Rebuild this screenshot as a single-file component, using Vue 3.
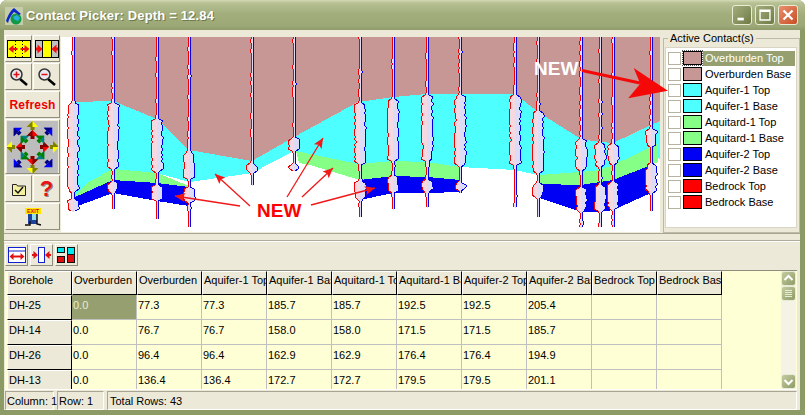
<template>
  <div class="window">
    <div class="title">
      <svg class="app-icon" width="18" height="18" viewBox="0 0 18 18">
        <rect width="18" height="18" fill="#c4ccaa"/>
        <circle cx="11" cy="12" r="5.500" fill="#109a48"/>
        <path d="M8 10l4-2 3 3-2 3-3-1z" fill="#28b0e0"/>
        <path d="M1 14C3 8 6 3 9 1l7 6-2 1-5-3C6 8 4 12 3 16z" fill="#0c28c8"/>
      </svg>
      <span class="title-text">Contact Picker: Depth = 12.84</span>
      <div class="win-btns">
        <button class="wb"><svg width="20" height="20" viewBox="0 0 20 20"><rect x="5" y="13" width="7" height="3" fill="#fff"/></svg></button>
        <button class="wb"><svg width="20" height="20" viewBox="0 0 20 20"><path d="M4.500 4.500h11v11h-11z M4 6h12" fill="none" stroke="#fff" stroke-width="1.500"/></svg></button>
        <button class="wb close"><svg width="20" height="20" viewBox="0 0 20 20"><path d="M5 5l10 10M15 5L5 15" stroke="#fff" stroke-width="2.500"/></svg></button>
      </div>
    </div>

    <div class="body">
      <div class="main">
        <div class="toolbar">
          <button class="tb">
            <svg width="24" height="18" viewBox="0 0 24 18"><rect x=".5" y=".5" width="23" height="17" fill="#ffff00" stroke="#000"/><path d="M8.500 1v16M15.500 1v16" stroke="#000" stroke-dasharray="1 2"/><path d="M1.500 9l5-4v3h4v2h-4v3zM22.500 9l-5-4v3h-4v2h4v3z" fill="#f01010"/></svg>
          </button>
          <button class="tb">
            <svg width="24" height="18" viewBox="0 0 24 18"><rect x=".5" y=".5" width="23" height="17" fill="#c0c0c0" stroke="#000"/><rect x="7.500" y=".5" width="9" height="17" fill="#ffff00" stroke="#000"/><path d="M7.500 9l-5-4.500v3h-1.500v3h1.500v3zM16.500 9l5-4.500v3h1.500v3h-1.500v3z" fill="#f01010"/></svg>
          </button>
          <button class="tb">
            <svg width="20" height="20" viewBox="0 0 20 20"><path d="M11 12l7 6" stroke="#000" stroke-width="2.500"/><circle cx="7.500" cy="7.500" r="5.500" fill="#e8e8f0" stroke="#333" stroke-width="1.500"/><path d="M4.500 7.500h6M7.500 4.500v6" stroke="#e01010" stroke-width="1.500"/></svg>
          </button>
          <button class="tb">
            <svg width="20" height="20" viewBox="0 0 20 20"><path d="M11 12l7 6" stroke="#000" stroke-width="2.500"/><circle cx="7.500" cy="7.500" r="5.500" fill="#e8e8f0" stroke="#333" stroke-width="1.500"/><path d="M4.500 7.500h6" stroke="#e01010" stroke-width="1.500"/></svg>
          </button>
          <button class="tb wide refresh">Refresh</button>
          <button class="tb wide nav">
            <svg width="51" height="52" viewBox="0 0 51 52">
              <rect width="51" height="52" fill="#bdbdbd"/>
              <g v-for="a in navArrows" :key="a.key" :transform="a.transform">
                <path d="M0 -6L-6 0H6z" :fill="a.light"/>
                <path d="M0 -6L-6 0H0z" :fill="a.dark"/>
                <rect x="-2" y="0" width="4" height="3" :fill="a.dark"/>
              </g>
            </svg>
          </button>
          <button class="tb">
            <svg width="16" height="16" viewBox="0 0 16 16"><path d="M1.500 3.500h4l1 1.500h8v9.500h-13z" fill="#f5f0a0" stroke="#222"/><path d="M4 9l3 3 5-6" fill="none" stroke="#111" stroke-width="1.500"/></svg>
          </button>
          <button class="tb help">?</button>
          <button class="tb wide">
            <svg width="18" height="18" viewBox="0 0 18 18"><rect x="1" y="0" width="16" height="6" fill="#ffe800"/><text x="9" y="5" text-anchor="middle" class="exit-text">EXIT</text><rect x="4" y="6" width="9" height="10" fill="#2040a0"/><rect x="8" y="6" width="5" height="6" fill="#90e0f0"/><path d="M1 17h5v-4M13 6v10l4 1" fill="none" stroke="#111" stroke-width="1.500"/></svg>
          </button>
        </div>

        <svg class="canvas" viewBox="61 37 599 195" width="599" height="195" shape-rendering="crispEdges">
          <polygon fill="#c79795" :points="brown"/>
          <polygon fill="#4dffff" :points="cyan"/>
          <polygon fill="#85ff85" :points="greenA"/>
          <polygon fill="#85ff85" :points="greenB"/>
          <polygon fill="#85ff85" :points="greenC"/>
          <polygon fill="#0000f5" :points="blueA"/>
          <polygon fill="#0000f5" :points="blueB"/>
          <polygon fill="#0000f5" :points="blueC"/>
          <g v-for="h in holes" :key="h.x">
            <path :d="h.leftFill" fill="#f6d8e0"/>
            <path :d="h.rightFill" fill="#dcdcf6"/>
            <path :d="h.left" fill="none" stroke="#f00000"/>
            <path :d="h.right" fill="none" stroke="#0000f0"/>
          </g>
          <g shape-rendering="auto">
            <g v-for="(a, i) in thinArrows" :key="i">
              <line :x1="a[0]" :y1="a[1]" :x2="a[2]" :y2="a[3]" stroke="#f01818" stroke-width="1.300"/>
              <polygon :points="arrowHead(a)" fill="#f01818"/>
            </g>
            <path d="M582 70.500L640 83M637 72L664 90L632 96L642 84z" fill="#f40808" stroke="#f40808" stroke-width="3"/>
            <text x="257" y="217" class="new red">NEW</text>
            <text x="534" y="75" class="new white">NEW</text>
          </g>
        </svg>

        <fieldset class="contacts">
          <legend>Active Contact(s)</legend>
          <div class="list">
            <div v-for="(c, i) in contacts" :key="c.name" class="row">
              <span class="check"></span>
              <span :class="['swatch', i === 0 ? 'focus' : '']" :style="{ background: c.color }"></span>
              <span :class="['label', i === 0 ? 'sel' : '']">{{ c.name }}</span>
            </div>
          </div>
        </fieldset>
      </div>

      <div class="actions">
        <button class="ab">
          <svg width="18" height="17" viewBox="0 0 18 17"><rect x=".5" y=".5" width="17" height="15" fill="#fff" stroke="#1020d0" stroke-width="1"/><path d="M1 4h16" stroke="#1020d0"/><path d="M3 9.500h12" stroke="#e01010" stroke-width="2"/><path d="M1.500 9.500l4-3.500v7zM16.500 9.500l-4-3.500v7z" fill="#e01010"/></svg>
        </button>
        <button class="ab">
          <svg width="20" height="17" viewBox="0 0 20 17"><rect x="6.500" y=".5" width="6" height="15" fill="#fff" stroke="#1020d0"/><path d="M0 8h5M14 8h5" stroke="#e01010" stroke-width="2"/><path d="M6 8L1.500 4v8zM13 8l4.500-4v8z" fill="#e01010"/></svg>
        </button>
        <button class="ab">
          <svg width="19" height="16" viewBox="0 0 19 16"><rect x=".5" y=".5" width="7" height="5" fill="#00e8f0" stroke="#111"/><rect x="10.500" y=".5" width="7" height="7" fill="#00e8f0" stroke="#111"/><rect x=".5" y="9.500" width="7" height="6" fill="#e01010" stroke="#111"/><rect x="10.500" y="7.500" width="7" height="8" fill="#e01010" stroke="#111"/></svg>
        </button>
      </div>

      <div class="grid-wrap">
        <div class="grid">
          <div class="grow head">
            <div class="cell hd" v-for="h in headers" :key="h">{{ h }}</div>
          </div>
          <div class="grow" v-for="(r, i) in rows" :key="r[0]">
            <div class="cell hd side">{{ r[0] }}</div>
            <div v-for="(v, j) in r.slice(1)" :key="j" :class="['cell', i === 0 && j === 0 ? 'cur' : '']">{{ v }}</div>
          </div>
        </div>
        <div class="scroll">
          <button class="sb"><svg width="13" height="13" viewBox="0 0 13 13"><path d="M2.500 8l4-4 4 4" fill="none" stroke="#fff" stroke-width="2"/></svg></button>
          <button class="sb thumb"><svg width="9" height="9" viewBox="0 0 9 9"><path d="M1 1.500h7M1 3.500h7M1 5.500h7M1 7.500h7" stroke="#e8ecd0"/></svg></button>
          <div class="track"></div>
          <button class="sb"><svg width="13" height="13" viewBox="0 0 13 13"><path d="M2.500 5l4 4 4-4" fill="none" stroke="#fff" stroke-width="2"/></svg></button>
        </div>
      </div>

      <div class="status">
        <span class="pane p1">Column: 1</span>
        <span class="pane p2">Row: 1</span>
        <span class="pane p3">Total Rows: 43</span>
      </div>
    </div>
  </div>
</template>

<script setup>
const pts = a => a.map(p => p.join(',')).join(' ')

const brownLine = [[73,102],[113,101],[157,119],[189,150],[252,161],[294,137],[358,102],[393,97],[427,94],[460,94],[515,94],[538,112],[581,139],[600,142],[613,143],[651,125],[660,121]]
const brown = pts([[73,37],[660,37],...brownLine.slice().reverse()])
const cyan = pts([...brownLine,[660,160],[651,147],[613,165],[600,170],[581,172],[538,175],[515,170],[460,167],[427,162],[393,161],[358,164],[294,151],[252,173],[189,182],[157,173],[113,169],[73,197]])
const greenA = pts([[73,197],[90,181],[113,169],[157,173],[189,186],[189,187],[157,183],[113,180],[78,197]])
const greenB = pts([[296,151],[358,164],[393,161],[427,162],[460,167],[460,180],[427,177],[393,176],[360,180],[310,165],[299,163]])
const greenC = pts([[538,175],[581,172],[600,170],[613,165],[651,147],[658,143],[658,162],[651,165],[613,180],[600,182],[581,185],[540,184]])
const blueA = pts([[75,197],[113,180],[157,183],[189,187],[189,206],[157,201],[113,193],[75,207]])
const blueB = pts([[360,180],[393,176],[427,177],[460,180],[460,192],[427,193],[393,193],[360,200]])
const blueC = pts([[540,184],[581,185],[600,182],[613,180],[651,165],[651,193],[613,210],[600,212],[581,212],[540,198]])

const holeData = [
  [73, 212, [102, 193], [198, 212]],
  [113, 210, [102, 170], [181, 193]],
  [157, 219, [118, 173], [184, 201]],
  [189, 227, [152, 180], [187, 203]],
  [252, 186, [163, 174]],
  [294, 171, [137, 152], [163, 171]],
  [360, 217, [102, 165], [180, 200]],
  [393, 210, [98, 162], [175, 193]],
  [427, 208, [94, 162], [179, 193]],
  [460, 193, [94, 167], [182, 191]],
  [515, 208, [94, 166]],
  [538, 217, [110, 174], [183, 198]],
  [581, 228, [138, 171], [187, 212]],
  [600, 227, [142, 167], [184, 212]],
  [613, 227, [143, 165], [181, 210]],
  [651, 212, [128, 147], [163, 193]]
]

// little stable wobble so the logs look like real curves
function wobble(x, y) {
  const s = Math.sin(x * 12.9898 + y * 78.233) * 43758.5453
  return s - Math.floor(s)
}

function halfWidth(blobs, y) {
  for (const [a, b] of blobs) {
    if (y >= a && y <= b) {
      return 1 + Math.min(y - a, b - y, 3)
    }
  }
  return 1
}

const holes = holeData.map(([x, bottom, ...blobs]) => {
  const l = []
  const r = []
  for (let y = 37; y <= bottom; y += 2) {
    const w = halfWidth(blobs, y)
    const amp = w > 2 ? 2.500 : (wobble(x, y * 2) > 0.75 ? 1 : 0)
    l.push([Math.round(x - w - wobble(x, y) * amp), y])
    r.push([Math.round(x + w + wobble(x + 3, y) * amp), y])
  }
  const line = a => 'M' + a.map(p => p.join(' ')).join('L')
  const back = [[x, bottom], [x, 37]]
  return {
    x,
    left: line(l),
    right: line(r),
    leftFill: line([...l, ...back]) + 'z',
    rightFill: line([...r, ...back]) + 'z'
  }
})

const thinArrows = [
  [250, 206, 215, 174],
  [240, 206, 175, 196],
  [287, 197, 323, 138],
  [302, 197, 333, 168],
  [311, 205, 375, 188]
]

function arrowHead([x1, y1, x2, y2]) {
  const a = Math.atan2(y2 - y1, x2 - x1)
  const p = (d, t) => [x2 - d * Math.cos(a + t), y2 - d * Math.sin(a + t)].join(',')
  return [x2, y2].join(',') + ' ' + p(11, 0.42) + ' ' + p(8, 0) + ' ' + p(11, -0.42)
}

const navArrows = []
const navOuter = [[25.500, 6, 0], [46, 26, 90], [25.500, 47, 180], [5, 26, 270]]
const navOuterDiag = [[11, 11, 315], [41, 11, 45], [11, 42, 225], [41, 42, 135]]
const navInner = [[25.500, 15, 0], [36, 26, 90], [25.500, 38, 180], [15, 26, 270]]
const navInnerDiag = [[18, 19, 315], [33, 19, 45], [18, 34, 225], [33, 34, 135]]
const addNav = (list, light, dark) => list.forEach(([x, y, r]) => {
  navArrows.push({ key: `${x}-${y}`, transform: `translate(${x} ${y}) rotate(${r})`, light, dark })
})
addNav(navOuter, '#ffff00', '#808000')
addNav(navOuterDiag, '#0000ff', '#000080')
addNav(navInner, '#ff0000', '#800000')
addNav(navInnerDiag, '#008080', '#008000')

const contacts = [
  { name: 'Overburden Top', color: '#c79795' },
  { name: 'Overburden Base', color: '#c79795' },
  { name: 'Aquifer-1 Top', color: '#4dffff' },
  { name: 'Aquifer-1 Base', color: '#4dffff' },
  { name: 'Aquitard-1 Top', color: '#85ff85' },
  { name: 'Aquitard-1 Base', color: '#85ff85' },
  { name: 'Aquifer-2 Top', color: '#0000f5' },
  { name: 'Aquifer-2 Base', color: '#0000f5' },
  { name: 'Bedrock Top', color: '#ff0000' },
  { name: 'Bedrock Base', color: '#ff0000' }
]

const headers = ['Borehole', 'Overburden', 'Overburden', 'Aquifer-1 Top', 'Aquifer-1 Base', 'Aquitard-1 Top', 'Aquitard-1 Base', 'Aquifer-2 Top', 'Aquifer-2 Base', 'Bedrock Top', 'Bedrock Base']

const rows = [
  ['DH-25', '0.0', '77.3', '77.3', '185.7', '185.7', '192.5', '192.5', '205.4', '', ''],
  ['DH-14', '0.0', '76.7', '76.7', '158.0', '158.0', '171.5', '171.5', '185.7', '', ''],
  ['DH-26', '0.0', '96.4', '96.4', '162.9', '162.9', '176.4', '176.4', '194.9', '', ''],
  ['DH-13', '0.0', '136.4', '136.4', '172.7', '172.7', '179.5', '179.5', '201.1', '', '']
]
</script>

<style scoped>
.window { width: 805px; height: 415px; display: flex; flex-direction: column; font-family: "Liberation Sans", Arial, sans-serif; font-size: 11px; color: #000; background: #8c9a66; overflow: hidden; border-radius: 7px 7px 0 0; }
button { font-family: inherit; font-size: 11px; padding: 0; margin: 0; display: flex; align-items: center; justify-content: center; }

.title { height: 30px; flex: none; display: flex; align-items: center; padding: 0 7px 0 5px; box-sizing: border-box; background: linear-gradient(#d3dab6 0, #b6c093 3px, #a3ae7d 14px, #9ca877 26px, #8f9b69 30px); }
.app-icon { flex: none; margin-top: 2px; }
.title-text { margin-left: 3px; color: #fff; font-weight: bold; font-size: 13px; letter-spacing: .17px; text-shadow: 1px 1px 0 #6f7a4c; }
.win-btns { margin-left: auto; display: flex; gap: 3px; }
.wb { width: 20px; height: 20px; border: 1px solid #e8ecd4; border-radius: 3px; background: linear-gradient(135deg, #a3ad7c, #6e7b46); }
.wb.close { background: linear-gradient(135deg, #e9906c, #c94e26); }

.body { flex: 1; min-height: 0; margin: 0 5px 5px 4px; background: #ece9d8; display: flex; flex-direction: column; }
.main { height: 204px; flex: none; display: flex; border-bottom: 1px solid #a8a594; box-sizing: border-box; }

.toolbar { width: 57px; flex: none; padding: 5px 0 0 1px; box-sizing: border-box; display: flex; flex-wrap: wrap; align-content: flex-start; gap: 1px; }
.tb { width: 27px; height: 27px; background: #ece9d8; border: 1px solid; border-color: #fff #8f8d7e #8f8d7e #fff; }
.tb.wide { width: 55px; }
.tb.nav { height: 55px; }
.refresh { color: #f00000; font-weight: bold; font-size: 12px; letter-spacing: .2px; }
.help { color: #e81010; font-weight: bold; font-size: 22px; font-family: "Liberation Sans", sans-serif; text-shadow: 1px 1px 0 #888; }
.exit-text { font: bold 5.500px "Liberation Sans", sans-serif; fill: #e01010; }

.canvas { flex: none; margin-top: 7px; background: #fff; overflow: visible; position: relative; z-index: 2; display: block; }
.new { font-family: "Liberation Sans", sans-serif; font-weight: bold; font-size: 19px; }
.new.red { fill: #f00; }
.new.white { fill: #fff; }

.contacts { width: 137px; height: 201px; margin: 2px 0 0 3px; padding: 3px 2px 3px 1px; border: 1px solid #bdbaa6; box-sizing: border-box; min-width: 0; }
.contacts legend { padding: 0 2px; margin-left: 3px; height: 12px; line-height: 12px; color: #000; }
.list { height: 181px; background: #fff; padding-top: 2px; box-sizing: border-box; border: 1px solid #d8d5c4; }
.row { height: 16px; display: flex; align-items: center; padding-left: 2px; }
.check { width: 11px; height: 11px; border: 1px solid #b5b29d; flex: none; box-sizing: content-box; }
.swatch { width: 17px; height: 12px; margin-left: 2px; border: 1px solid #000; flex: none; }
.swatch.focus { outline: 1px dotted #555; }
.label { margin-left: 1px; padding-left: 2px; flex: 1; line-height: 15px; white-space: nowrap; }
.label.sel { background: #959f70; color: #fff; margin-right: 1px; }

.actions { height: 30px; flex: none; margin-top: 6px; padding-top: 3px; padding-left: 1px; box-sizing: border-box; display: flex; align-items: flex-start; gap: 1px; border-top: 1px solid #b0ad9a; box-shadow: inset 0 1px 0 #fff; }
.ab { width: 23px; height: 22px; background: #ece9d8; border: 1px solid; border-color: #fff #8f8d7e #8f8d7e #fff; }
.ab + .ab { margin-left: 1px; }

.grid-wrap { height: 120px; flex: none; margin: 0 3px 0 1px; display: flex; background: #ffffd6; border-top: 1px solid #8f8d7e; border-bottom: 1px solid #fff; box-sizing: border-box; }
.grid { flex: 1; min-width: 0; overflow: hidden; padding-left: 2px; }
.grow { display: flex; height: 25px; }
.grow.head { height: 24px; }
.cell { width: 65px; flex: none; box-sizing: border-box; padding: 0 0 0 1px; line-height: 20px; border-right: 1px solid #c0c0c0; border-bottom: 1px solid #c0c0c0; white-space: nowrap; overflow: hidden; }
.hd { background: #ece9d8; border-color: #fff #000 #000 #fff; border-style: solid; border-width: 1px 1px 1px 1px; line-height: 17px; }
.side { line-height: 18px; border-bottom-color: #000; }
.cur { background: #959f70; color: #e8ecd0; }

.scroll { width: 15px; flex: none; margin-right: 1px; display: flex; flex-direction: column; background: #f4f3e6; }
.sb { width: 15px; height: 15px; flex: none; background: linear-gradient(135deg, #c3cca0, #8f9b69); border: 1px solid #e8ecd4; border-radius: 3px; box-sizing: border-box; }
.track { flex: 1; }

.status { height: 19px; flex: none; margin-top: 1px; display: flex; gap: 3px; padding-left: 1px; }
.pane { box-sizing: border-box; height: 19px; line-height: 18px; padding-left: 1px; border: 1px solid; border-color: #a8a594 #fff #fff #a8a594; white-space: nowrap; }
.p1 { width: 49px; }
.p2 { width: 47px; }
.p3 { flex: 1; padding-left: 2px; margin-right: 3px; }
</style>

<style>
body { margin: 0; background: #fff; overflow: hidden; }
</style>
